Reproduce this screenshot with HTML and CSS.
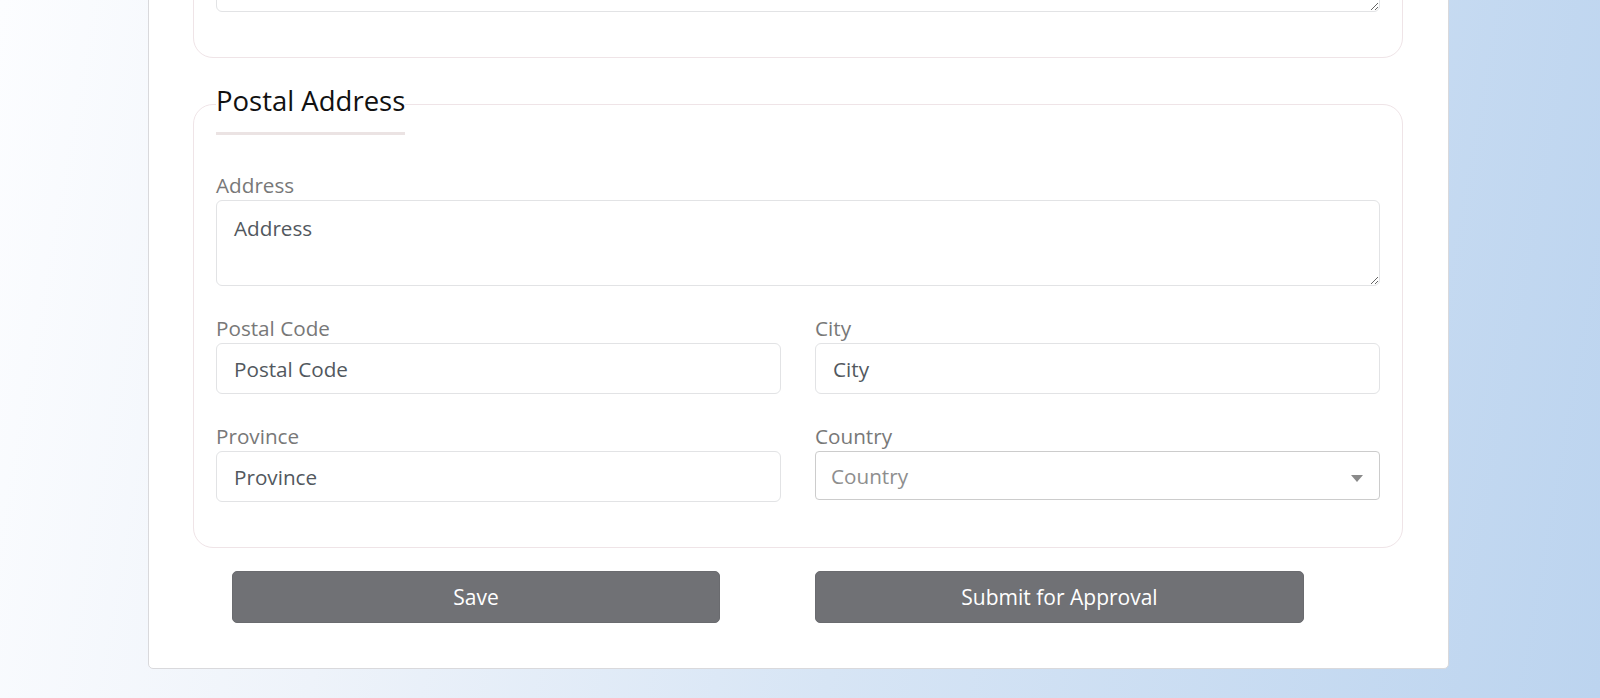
FILE: index.html
```html
<!DOCTYPE html>
<html lang="en">
<head>
<meta charset="utf-8">
<title>Postal Address</title>
<link rel="stylesheet" href="styles.css">
</head>
<body>
<main class="card">
  <fieldset class="group group-first" aria-label="Remarks">
    <div class="field">
      <textarea class="control control-area" aria-label="Remarks"></textarea>
    </div>
  </fieldset>

  <fieldset class="group group-next">
    <legend class="group-title">Postal Address</legend>
    <div class="field">
      <label class="field-label" for="address">Address</label>
      <textarea class="control control-area" id="address" placeholder="Address"></textarea>
    </div>
    <div class="row">
      <div class="field">
        <label class="field-label" for="postal">Postal Code</label>
        <input class="control" id="postal" type="text" placeholder="Postal Code">
      </div>
      <div class="field">
        <label class="field-label" for="city">City</label>
        <input class="control" id="city" type="text" placeholder="City">
      </div>
    </div>
    <div class="row">
      <div class="field">
        <label class="field-label" for="province">Province</label>
        <input class="control" id="province" type="text" placeholder="Province">
      </div>
      <div class="field">
        <span class="field-label">Country</span>
        <div class="select" role="combobox" aria-expanded="false">
          <span class="select-text">Country</span>
          <svg class="select-arrow" width="12" height="7" viewBox="0 0 12 7" aria-hidden="true"><path d="M0 0h12L6 7z" fill="#8a8a8a"/></svg>
        </div>
      </div>
    </div>
  </fieldset>

  <div class="actions">
    <button class="btn btn-save" type="button">Save</button>
    <button class="btn btn-submit" type="button">Submit for Approval</button>
  </div>
</main>
</body>
</html>
```

FILE: styles.css
```css
html, body {
  margin: 0;
  padding: 0;
}

body {
  height: 698px;
  overflow: hidden;
  background: linear-gradient(100deg, #fcfdff 0%, #eef3fa 25%, #d7e5f5 55%, #bcd4ef 100%);
  font-family: "Open Sans", "Noto Sans", sans-serif;
}

.card {
  box-sizing: border-box;
  width: 1301px;
  margin: -131px 0 0 148px;
  padding: 20px 45px 45px 44px;
  background: #ffffff;
  border: 1px solid #d9d9dc;
  border-radius: 5px;
}

.group {
  margin: 0;
  padding: 35px 22px 18px 22px;
  border: 1px solid #efe4e7;
  border-radius: 20px;
  min-width: 0;
}

.group-next {
  margin-top: 16px;
}

.group-title {
  padding: 10px 0 14px 0;
  font-size: 27.5px;
  line-height: 34px;
  color: #111111;
  border-bottom: 3px solid #ebe3e3;
}

.field {
  display: flex;
  flex-direction: column;
  margin-bottom: 27px;
  min-width: 0;
}

.row {
  display: grid;
  grid-template-columns: 1fr 1fr;
  column-gap: 34px;
}

.field-label {
  font-size: 20.7px;
  line-height: 30px;
  color: #787878;
}

.control {
  box-sizing: border-box;
  width: 100%;
  height: 51px;
  margin: 0;
  padding: 9.5px 17px;
  font-family: inherit;
  font-size: 20.7px;
  line-height: 31px;
  color: #495057;
  background: #ffffff;
  border: 1px solid #e2e3e5;
  border-radius: 6px;
  outline: none;
}

.control::placeholder {
  color: #52585e;
  opacity: 1;
}

.control-area {
  height: 86px;
  padding-top: 12px;
  display: block;
  resize: vertical;
}

.select {
  box-sizing: border-box;
  height: 49px;
  display: flex;
  align-items: center;
  justify-content: space-between;
  padding: 0 16px 0 15px;
  border: 1px solid #cccccc;
  border-radius: 4px;
  background: #ffffff;
}

.select-text {
  font-size: 20.7px;
  line-height: 30px;
  color: #8e8e8e;
}

.select-arrow {
  display: block;
  margin-top: 6px;
}

.actions {
  display: grid;
  grid-template-columns: 1fr 1fr;
  column-gap: 34px;
  margin: 23px 23px 0 23px;
}

.btn {
  box-sizing: border-box;
  height: 52px;
  padding: 0;
  font-family: inherit;
  font-size: 21px;
  color: #ffffff;
  background: #707175;
  border: 1px solid #6a6b6f;
  border-radius: 5px;
  cursor: pointer;
}

.btn-save {
  width: 488px;
  margin-left: 16px;
}

.btn-submit {
  width: 489px;
}
```
